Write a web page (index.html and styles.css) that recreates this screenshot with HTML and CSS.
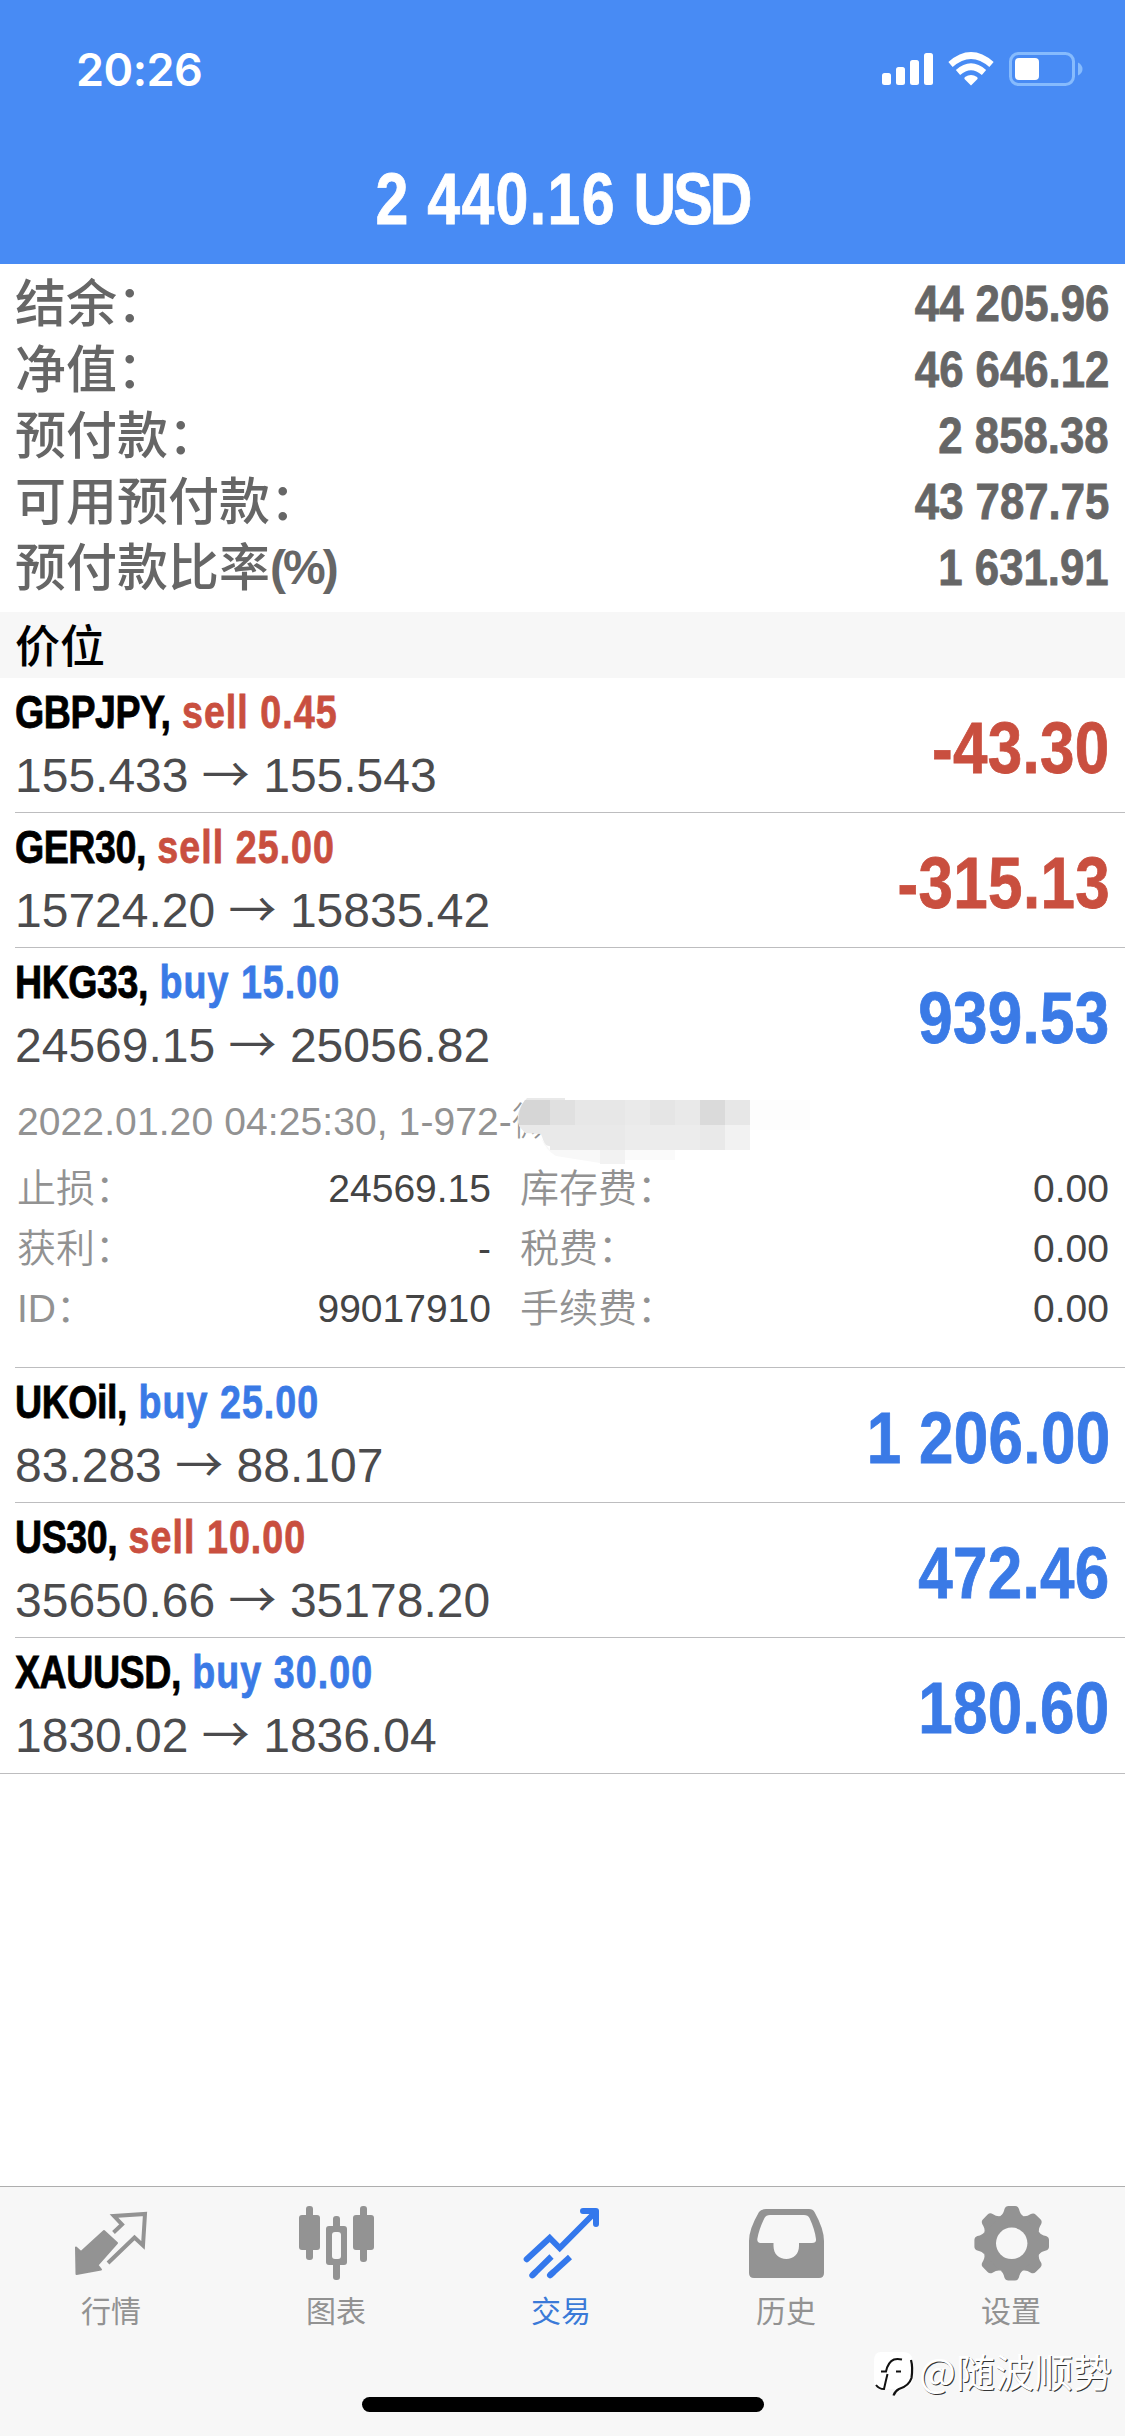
FILE: index.html
```html
<!DOCTYPE html>
<html lang="zh-CN">
<head>
    <meta charset="UTF-8">
    <meta name="viewport" content="width=device-width, initial-scale=1.0">
    <title>交易</title>
    <link rel="stylesheet" href="styles.css">
</head>
<body>
    <header class="header">
        <div class="status-bar">
            <span class="time">20:26</span>
            <svg class="status-icons" width="204" height="40" viewBox="880 50 204 40">
                <g fill="#fff">
                    <rect x="882" y="73" width="9" height="12" rx="2.5"/>
                    <rect x="896" y="67" width="9" height="18" rx="2.5"/>
                    <rect x="910" y="60" width="9" height="25" rx="2.5"/>
                    <rect x="924" y="53" width="9" height="32" rx="2.5"/>
                    <path d="M971 85.500L964.500 79Q964 78 965 77Q971 73 977 77Q978 78 977.500 79Z"/>
                </g>
                <g fill="none" stroke="#fff" stroke-width="6.500">
                    <path d="M950.500 64.500Q971 46.500 991.500 64.500"/>
                    <path d="M958 72.500Q971 61 984 72.500"/>
                </g>
                <rect x="1010.500" y="53.500" width="63" height="31" rx="8" fill="none" stroke="#86bbfd" stroke-width="3"/>
                <rect x="1015" y="58" width="24" height="22" rx="4" fill="#fff"/>
                <path d="M1078 62.500Q1082.500 65 1082.500 69Q1082.500 73 1078 75.500Z" fill="#86bbfd"/>
            </svg>
        </div>
        <h1 class="profit-total">2 440.16 <span class="currency">USD</span></h1>
    </header>

    <main class="content">
        <section class="summary">
            <div class="summary-row"><span class="summary-label">结余：</span><span class="summary-value">44 205.96</span></div>
            <div class="summary-row"><span class="summary-label">净值：</span><span class="summary-value">46 646.12</span></div>
            <div class="summary-row"><span class="summary-label">预付款：</span><span class="summary-value">2 858.38</span></div>
            <div class="summary-row"><span class="summary-label">可用预付款：</span><span class="summary-value">43 787.75</span></div>
            <div class="summary-row"><span class="summary-label">预付款比率<b class="percent">(%)</b></span><span class="summary-value">1 631.91</span></div>
        </section>

        <h2 class="section-title">价位</h2>

        <section class="positions">
            <div class="position">
                <div class="position-info">
                    <div class="symbol"><span class="symbol-name">GBPJPY,</span> <span class="sell">sell 0.45</span></div>
                    <div class="prices">155.433 <span class="arrow">→</span> 155.543</div>
                </div>
                <div class="profit sell">-43.30</div>
            </div>
            <div class="position">
                <div class="position-info">
                    <div class="symbol"><span class="symbol-name">GER30,</span> <span class="sell">sell 25.00</span></div>
                    <div class="prices">15724.20 <span class="arrow">→</span> 15835.42</div>
                </div>
                <div class="profit sell">-315.13</div>
            </div>
            <div class="position open">
                <div class="position-info">
                    <div class="symbol"><span class="symbol-name">HKG33,</span> <span class="buy">buy 15.00</span></div>
                    <div class="prices">24569.15 <span class="arrow">→</span> 25056.82</div>
                </div>
                <div class="profit buy">939.53</div>
            </div>
            <div class="details">
                <div class="details-head">
                    2022.01.20 04:25:30, 1-972-<span class="comment">微</span>
                    <svg class="mosaic" width="300" height="66" viewBox="515 1098 300 66">
                        <path d="M527 1098Q514 1112 519 1126L525 1133L541 1134L545 1145L565 1150V1098Z" fill="#e9e9e9"/>
                        <path d="M541 1138Q546 1150 556 1156L600 1163H625V1150H550Z" fill="#f8f8f8"/>
                        <path d="M525 1100H550V1125H519Q517 1110 525 1100Z" fill="#d6d6d6"/>
                        <rect x="550" y="1100" width="25" height="25" fill="#e0e0e0"/>
                        <rect x="575" y="1100" width="50" height="25" fill="#e7e7e7"/>
                        <rect x="625" y="1100" width="25" height="25" fill="#eaeaea"/>
                        <rect x="650" y="1100" width="25" height="25" fill="#e5e5e5"/>
                        <rect x="675" y="1100" width="25" height="25" fill="#e9e9e9"/>
                        <rect x="700" y="1100" width="25" height="25" fill="#dadada"/>
                        <rect x="725" y="1100" width="25" height="25" fill="#e7e7e7"/>
                        <rect x="550" y="1125" width="75" height="25" fill="#e9e9e9"/>
                        <rect x="625" y="1125" width="75" height="25" fill="#ececec"/>
                        <rect x="700" y="1125" width="25" height="25" fill="#e9e9e9"/>
                        <rect x="725" y="1125" width="25" height="25" fill="#f2f2f2"/>
                        <rect x="600" y="1150" width="25" height="14" fill="#f2f2f2"/>
                        <rect x="625" y="1150" width="50" height="10" fill="#fafafa"/>
                        <rect x="750" y="1100" width="60" height="30" fill="#fdfdfd"/>
                    </svg>
                </div>
                <div class="details-grid">
                    <span class="name">止损：</span><span class="value">24569.15</span>
                    <span class="name">库存费：</span><span class="value">0.00</span>
                    <span class="name">获利：</span><span class="value">-</span>
                    <span class="name">税费：</span><span class="value">0.00</span>
                    <span class="name">ID：</span><span class="value">99017910</span>
                    <span class="name">手续费：</span><span class="value">0.00</span>
                </div>
            </div>
            <div class="position">
                <div class="position-info">
                    <div class="symbol"><span class="symbol-name">UKOil,</span> <span class="buy">buy 25.00</span></div>
                    <div class="prices">83.283 <span class="arrow">→</span> 88.107</div>
                </div>
                <div class="profit buy">1 206.00</div>
            </div>
            <div class="position">
                <div class="position-info">
                    <div class="symbol"><span class="symbol-name">US30,</span> <span class="sell">sell 10.00</span></div>
                    <div class="prices">35650.66 <span class="arrow">→</span> 35178.20</div>
                </div>
                <div class="profit buy">472.46</div>
            </div>
            <div class="position last">
                <div class="position-info">
                    <div class="symbol"><span class="symbol-name">XAUUSD,</span> <span class="buy">buy 30.00</span></div>
                    <div class="prices">1830.02 <span class="arrow">→</span> 1836.04</div>
                </div>
                <div class="profit buy">180.60</div>
            </div>
        </section>
    </main>

    <nav class="tab-bar">
        <div class="tabs">
            <a class="tab">
                <svg width="225" height="100" viewBox="0 0 225 100">
                    <path d="M104 44L117 56L97.500 78L101 82.500L76.500 87L76 60.500L81 65Z" fill="#939393" stroke="#939393" stroke-width="2" stroke-linejoin="round"/>
                    <path d="M113.500 45.500L122 37.500L114 29L145 27L143 58.500L134.500 50.500L108 76" fill="none" stroke="#939393" stroke-width="4"/>
                </svg>
                <span>行情</span>
            </a>
            <a class="tab">
                <svg width="225" height="100" viewBox="0 0 225 100" fill="#939393">
                    <rect x="81" y="19" width="7" height="54" rx="3"/>
                    <rect x="74" y="28" width="21" height="35" rx="3"/>
                    <rect x="108" y="29" width="7" height="64" rx="3"/>
                    <rect x="101" y="39" width="21" height="39" rx="3"/>
                    <rect x="107" y="45" width="9" height="27" rx="3" fill="#f7f7f7"/>
                    <rect x="135" y="19" width="7" height="56" rx="3"/>
                    <rect x="128" y="28" width="21" height="35" rx="3"/>
                </svg>
                <span>图表</span>
            </a>
            <a class="tab active">
                <svg width="225" height="100" viewBox="0 0 225 100" fill="none" stroke="#3478ec" stroke-width="6">
                    <path d="M76.700 72.300L99.700 51L109.700 61L145.500 25" stroke-linecap="round"/>
                    <path d="M133 24H146V37" stroke-linecap="round" stroke-linejoin="round"/>
                    <path d="M82.300 88.300L101.500 69.500M100 88.300L120 70"/>
                    <path d="M82.300 88.300L85 85.700M100 88.300L103 85.500" stroke-linecap="round"/>
                </svg>
                <span>交易</span>
            </a>
            <a class="tab">
                <svg width="225" height="100" viewBox="0 0 225 100">
                    <path fill="#939393" fill-rule="evenodd" d="M91 22H134Q138 22 139.500 25Q149 42 149 54V86Q149 91 144 91H79Q74 91 74 86V54Q74 42 84 25Q86 22 91 22ZM95 28Q91 28 89.500 31Q84 42 82.300 52Q82 56 85.500 56H98.500V59C98.500 67 104 72 111.300 72C118.500 72 124 67 124 59V56H137Q141.500 56 141 52Q140 43 134.500 31Q133 28 129 28Z"/>
                </svg>
                <span>历史</span>
            </a>
            <a class="tab">
                <svg width="225" height="100" viewBox="0 0 225 100">
                    <defs>
                        <path id="tooth" d="M100.500 29Q103.500 27 104.500 22Q105.500 19 108.500 19H115Q118 19 119 22Q120 27 123 29Z"/>
                    </defs>
                    <g fill="#939393">
                        <circle cx="111.700" cy="56.300" r="29.500"/>
                        <use href="#tooth"/>
                        <use href="#tooth" transform="rotate(45 111.700 56.300)"/>
                        <use href="#tooth" transform="rotate(90 111.700 56.300)"/>
                        <use href="#tooth" transform="rotate(135 111.700 56.300)"/>
                        <use href="#tooth" transform="rotate(180 111.700 56.300)"/>
                        <use href="#tooth" transform="rotate(225 111.700 56.300)"/>
                        <use href="#tooth" transform="rotate(270 111.700 56.300)"/>
                        <use href="#tooth" transform="rotate(315 111.700 56.300)"/>
                    </g>
                    <circle cx="111.700" cy="56.300" r="15.700" fill="#f7f7f7"/>
                </svg>
                <span>设置</span>
            </a>
        </div>
        <div class="home-indicator"></div>
        <div class="watermark">
            <svg width="46" height="46" viewBox="0 0 46 46">
                <path d="M8 1H30Q40 1 40 12V26Q40 36 30 38L20 44L22 38H10Q1 38 1 30V10Q1 1 8 1Z" fill="#fff"/>
                <path d="M38 9Q40 16 38.500 27Q36 35 26 38Q22 40 20.500 44.500" fill="none" stroke="#111" stroke-width="2.200"/>
                <path d="M3 34Q6 38 11 38Q13 29 14.500 23M8 20.500H13Q15 11 21 8.500Q24 7.500 29 8.500M23 20.500H28" fill="none" stroke="#111" stroke-width="2"/>
            </svg>
            <span>@随波顺势</span>
        </div>
    </nav>
</body>
</html>
```
FILE: styles.css
```css
* {
    box-sizing: border-box;
}

body {
    margin: 0;
    width: 1125px;
    height: 2436px;
    display: flex;
    flex-direction: column;
    background-color: #fff;
    font-family: "Liberation Sans", "Noto Sans CJK SC", sans-serif;
    overflow: hidden;
}

.header {
    height: 264px;
    background-color: #488bf4;
    color: #fff;
}

.status-bar {
    display: flex;
    justify-content: space-between;
    align-items: center;
    height: 140px;
    padding: 0 41px 0 76px;
}

.time {
    font-family: Inter, sans-serif;
    font-weight: 600;
    font-size: 45px;
    line-height: 50px;
    letter-spacing: -0.5px;
}

/* condensed bold */
.profit-total,
.summary-value,
.symbol,
.profit {
    font-weight: bold;
    white-space: nowrap;
    transform: scaleX(0.86);
    -webkit-text-stroke: 0.8px currentColor;
}

.profit-total {
    margin: 0;
    padding-top: 19px;
    font-size: 72px;
    line-height: 80px;
    text-align: center;
    letter-spacing: 1.6px;
    transform: scaleX(0.82);
}

.currency {
    letter-spacing: -3.5px;
}

.content {
    flex: 1;
}

.summary {
    height: 348px;
    padding: 6px 16px 0 15px;
}

.summary-row {
    display: flex;
    justify-content: space-between;
    height: 66px;
    color: #666;
}

.summary-label {
    font-family: "Noto Sans CJK SC", sans-serif;
    font-weight: 500;
    font-size: 51px;
    line-height: 60px;
}

.percent {
    font-family: "Liberation Sans", sans-serif;
    font-size: 48px;
    line-height: 1;
    letter-spacing: -3px;
    vertical-align: 2px;
}

.summary-value {
    font-size: 50px;
    line-height: 68px;
    transform: scaleX(0.875);
    transform-origin: right;
}

.section-title {
    margin: 0;
    height: 66px;
    padding: 0 15px;
    background-color: #f7f7f7;
    font-family: "Noto Sans CJK SC", sans-serif;
    font-weight: 500;
    font-size: 45px;
    line-height: 63px;
}

.position {
    display: flex;
    justify-content: space-between;
    height: 135px;
    margin-left: 15px;
    padding-right: 15px;
    border-bottom: 1px solid #bdbdbf;
}

.position.open {
    border-bottom: none;
}

.position.last {
    height: 136px;
    margin-left: 0;
    padding-left: 15px;
}

.symbol {
    padding-top: 7px;
    font-size: 47px;
    line-height: 54px;
    letter-spacing: 1.3px;
    transform: scaleX(0.8);
    transform-origin: left;
}

.symbol-name {
    letter-spacing: -0.6px;
}

.prices {
    padding-top: 8px;
    font-size: 48px;
    line-height: 54px;
    color: #4b4b4d;
    white-space: nowrap;
}

.arrow {
    font-family: "Noto Sans CJK SC", sans-serif;
    line-height: 1;
}

.profit {
    padding-top: 30px;
    font-size: 72px;
    line-height: 80px;
    letter-spacing: 0.4px;
    transform-origin: right;
}

.sell {
    color: #c94f3f;
}

.buy {
    color: #3a7ae6;
}

.details {
    height: 285px;
    margin-left: 15px;
    padding: 14px 16px 0 2px;
    border-bottom: 1px solid #bdbdbf;
    font-size: 39px;
    color: #929292;
}

.details-head {
    position: relative;
    height: 62px;
    line-height: 50px;
    letter-spacing: 0.1px;
    white-space: nowrap;
}

.comment {
    font-family: "Noto Sans CJK SC", sans-serif;
    font-weight: 300;
    line-height: 1;
}

.mosaic {
    position: absolute;
    left: 498px;
    top: 1px;
}

.details-grid {
    display: grid;
    grid-template-columns: 150px 324px 150px 1fr;
    grid-auto-rows: 60px;
    line-height: 60px;
}

.name {
    font-weight: 350;
    white-space: nowrap;
}

.name:nth-child(4n + 3) {
    padding-left: 29px;
}

.value {
    color: #444;
    text-align: right;
}

.tab-bar {
    position: relative;
    height: 250px;
    border-top: 1px solid #aeaeae;
    background-color: #f7f7f7;
}

.tabs {
    display: flex;
}

.tab {
    width: 225px;
    display: flex;
    flex-direction: column;
    font-family: "Noto Sans CJK SC", sans-serif;
    font-size: 30px;
    line-height: 44px;
    color: #929292;
}

.tab span {
    padding-right: 3px;
    text-align: center;
}

.tab.active {
    color: #3a7ad8;
}

.home-indicator {
    width: 402px;
    height: 15px;
    margin: 66px auto 0;
    border-radius: 8px;
    background-color: #000;
}

.watermark {
    position: absolute;
    left: 873px;
    top: 164px;
    display: flex;
    color: #fff;
    font-family: "Noto Sans CJK SC", sans-serif;
    font-size: 39px;
    line-height: 38px;
    text-shadow: 1px 1px 0 #333;
}
```
